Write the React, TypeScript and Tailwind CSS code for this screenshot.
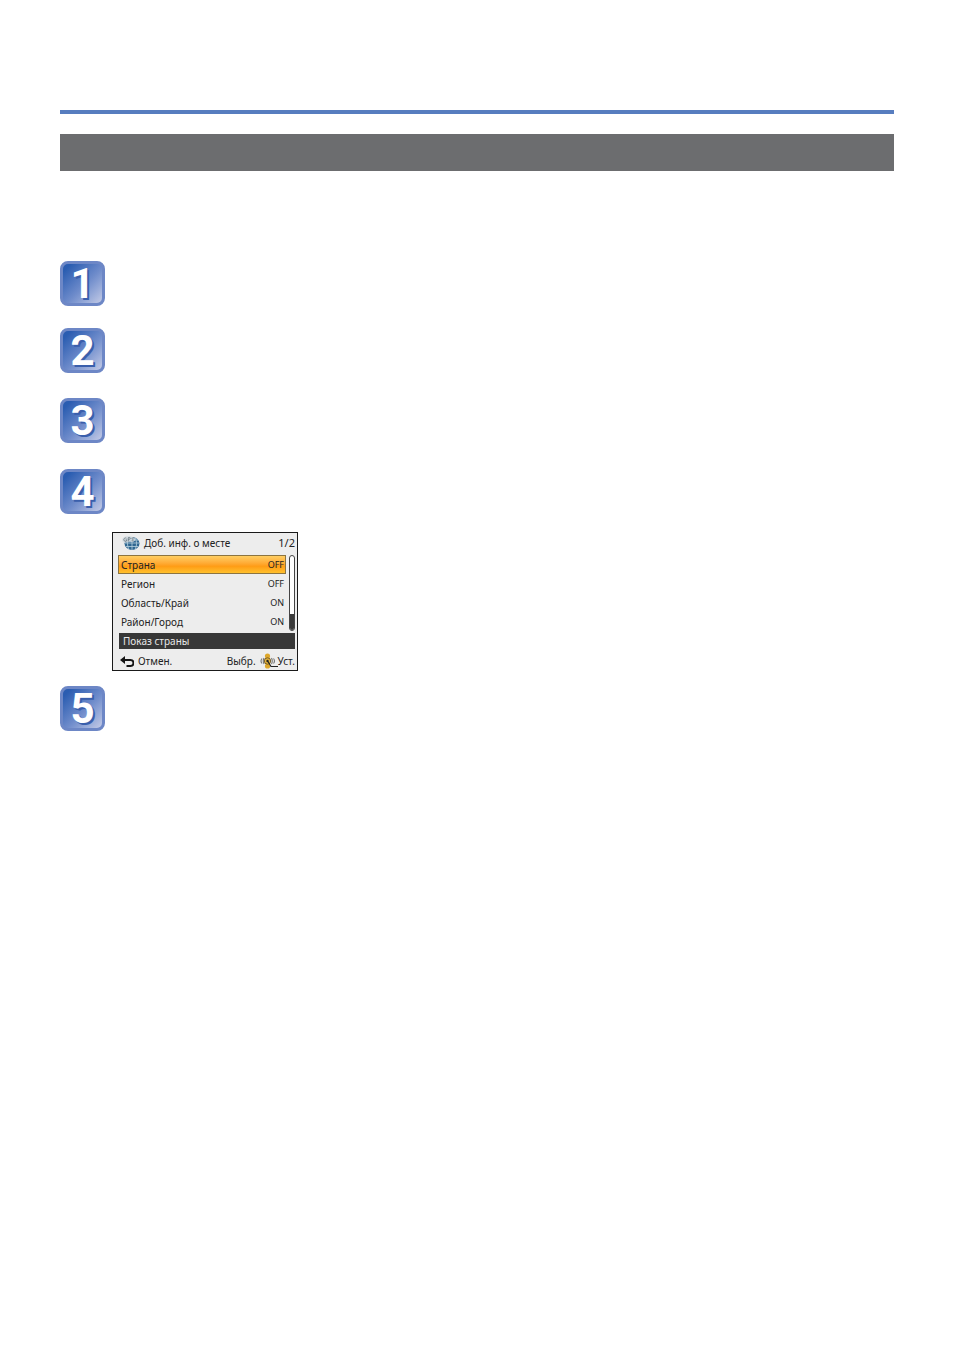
import { useState } from 'react';

const menuItems = [
  { label: 'Страна', value: 'OFF' },
  { label: 'Регион', value: 'OFF' },
  { label: 'Область/Край', value: 'ON' },
  { label: 'Район/Город', value: 'ON' },
];

function StepBadge({ number }: { number: string }) {
  return (
    <div className="flex h-[45px] w-[45px] items-center justify-center rounded-lg border-[3px] border-[#6d87c6] bg-linear-135 from-[#2a5db1] from-10% via-[#6f8ccb] via-55% to-[#c3cae6]">
      <span className="font-['Roboto',sans-serif] text-[42px] leading-[40px] font-bold text-white [text-shadow:2px_2px_0_#3a5fac]">
        {number}
      </span>
    </div>
  );
}

function GlobeIcon() {
  return (
    <svg viewBox="0 0 18 16" className="h-4 w-[18px]" aria-hidden="true">
      <ellipse cx="10" cy="8.500" rx="7.500" ry="6.500" fill="#2f6690" />
      <path d="M3 8h14.500M4 5h12M4 11.500h12M10 2v13M7 2.500c-2 4-2 8 0 12M13 2.500c2 4 2 8 0 12" fill="none" stroke="#b9d2e0" strokeWidth="0.8" />
      <path d="M.5 3.500C2.500 1 6 .8 8.500 1.200s4.500 1.500 5 3.500c-1 2-3 2.500-5 2.200S3 8.500 1.500 7.500 0 4.500 .5 3.500z" fill="#d5dde2" opacity="0.85" />
      <path d="M4.500 3.200C3 2.400 1.500 3.600 1.800 5s2 1.800 2.800.8V4.800H3.600M6.300 6.500v-4c2.600-.5 2.600 2 0 2M12 3c-1.500-.7-2.500.3-1.500 1.200s1 2-.8 1.500" fill="none" stroke="#67757d" strokeWidth="0.8" />
    </svg>
  );
}

function BackIcon() {
  return (
    <svg viewBox="0 0 14 12" className="h-3 w-3.5" aria-hidden="true">
      <path d="M0 5l5-4v8z" fill="#151515" />
      <path d="M4 5h6.500a2.500 2.500 0 0 1 0 6H6.500" fill="none" stroke="#151515" strokeWidth="2" />
    </svg>
  );
}

function CursorIcon() {
  return (
    <svg viewBox="0 0 18 16" className="h-4 w-[18px]" aria-hidden="true">
      <path d="M2 5.500q-2 2.500 0 5M4 5q-1.500 3 0 6M11.500 5q1.500 3 0 6M13.500 5.500q2 2.500 0 5" fill="none" stroke="#777" strokeWidth="1.100" />
      <circle cx="7.500" cy="3" r="2.600" fill="#dda72b" />
      <circle cx="7.500" cy="13" r="2.600" fill="#dda72b" />
      <circle cx="7.500" cy="8" r="3.200" fill="#e2b23c" stroke="#60491a" strokeWidth="0.800" />
      <circle cx="7.500" cy="8" r="1.200" fill="#222" />
      <path d="M8 8.500l3 5H18" fill="none" stroke="#222" strokeWidth="1.200" />
    </svg>
  );
}

function CameraScreen() {
  const [selected, setSelected] = useState('Страна');

  return (
    <div className="w-[186px] border border-[#1a1a1a] bg-[#ededed] font-['Noto_Sans',sans-serif] text-[10px] leading-4 text-[#222]">
      <div className="flex h-[22px] items-center justify-between pr-0.5 pb-0.5 pl-[9px]">
        <div className="flex items-center gap-1">
          <GlobeIcon />
          <h2>Доб. инф. о месте</h2>
        </div>
        <span className="text-[11px]">1/2</span>
      </div>

      <div className="flex justify-between pr-0.5 pl-[5px]">
        <ul className="w-[168px]">
          {menuItems.map((item) => (
            <li key={item.label}>
              <button
                type="button"
                onClick={() => setSelected(item.label)}
                className={`flex h-[19px] w-full items-center justify-between border pr-px pl-0.5 ${
                  selected === item.label
                    ? 'border-[#8c7440] bg-linear-to-b from-[#ffce62] via-[#ff9c14] via-60% to-[#ffc02c]'
                    : 'border-transparent'
                }`}
              >
                <span>{item.label}</span>
                <span className="text-[9px]">{item.value}</span>
              </button>
            </li>
          ))}
        </ul>
        <div className="flex w-1.5 flex-col overflow-hidden rounded-full border border-[#444] bg-white">
          <div className="mt-auto h-4 bg-[#3a3a3a]" />
        </div>
      </div>

      <p className="mt-0.5 mr-0.5 ml-1.5 bg-[#373737] px-1 text-[#e8e8e8]">Показ страны</p>

      <div className="flex h-[21px] items-center justify-between pt-0.5 pr-0.5 pl-[7px]">
        <button type="button" className="flex items-center gap-1">
          <BackIcon />
          Отмен.
        </button>
        <div className="flex items-center">
          <span className="pr-1">Выбр.</span>
          <CursorIcon />
          <span>Уст.</span>
        </div>
      </div>
    </div>
  );
}

export default function App() {
  return (
    <main className="min-h-screen bg-white px-[60px] pt-[110px] pb-16">
      <div className="h-1 bg-[#577dbf]" />
      <div className="mt-5 h-[37px] bg-[#6c6d6f]" />

      <ol className="mt-[90px]">
        <li className="mb-[22px]">
          <StepBadge number="1" />
        </li>
        <li className="mb-[25px]">
          <StepBadge number="2" />
        </li>
        <li className="mb-[26px]">
          <StepBadge number="3" />
        </li>
        <li className="mb-[15px]">
          <StepBadge number="4" />
          <div className="mt-[18px] pl-[52px]">
            <CameraScreen />
          </div>
        </li>
        <li>
          <StepBadge number="5" />
        </li>
      </ol>
    </main>
  );
}
